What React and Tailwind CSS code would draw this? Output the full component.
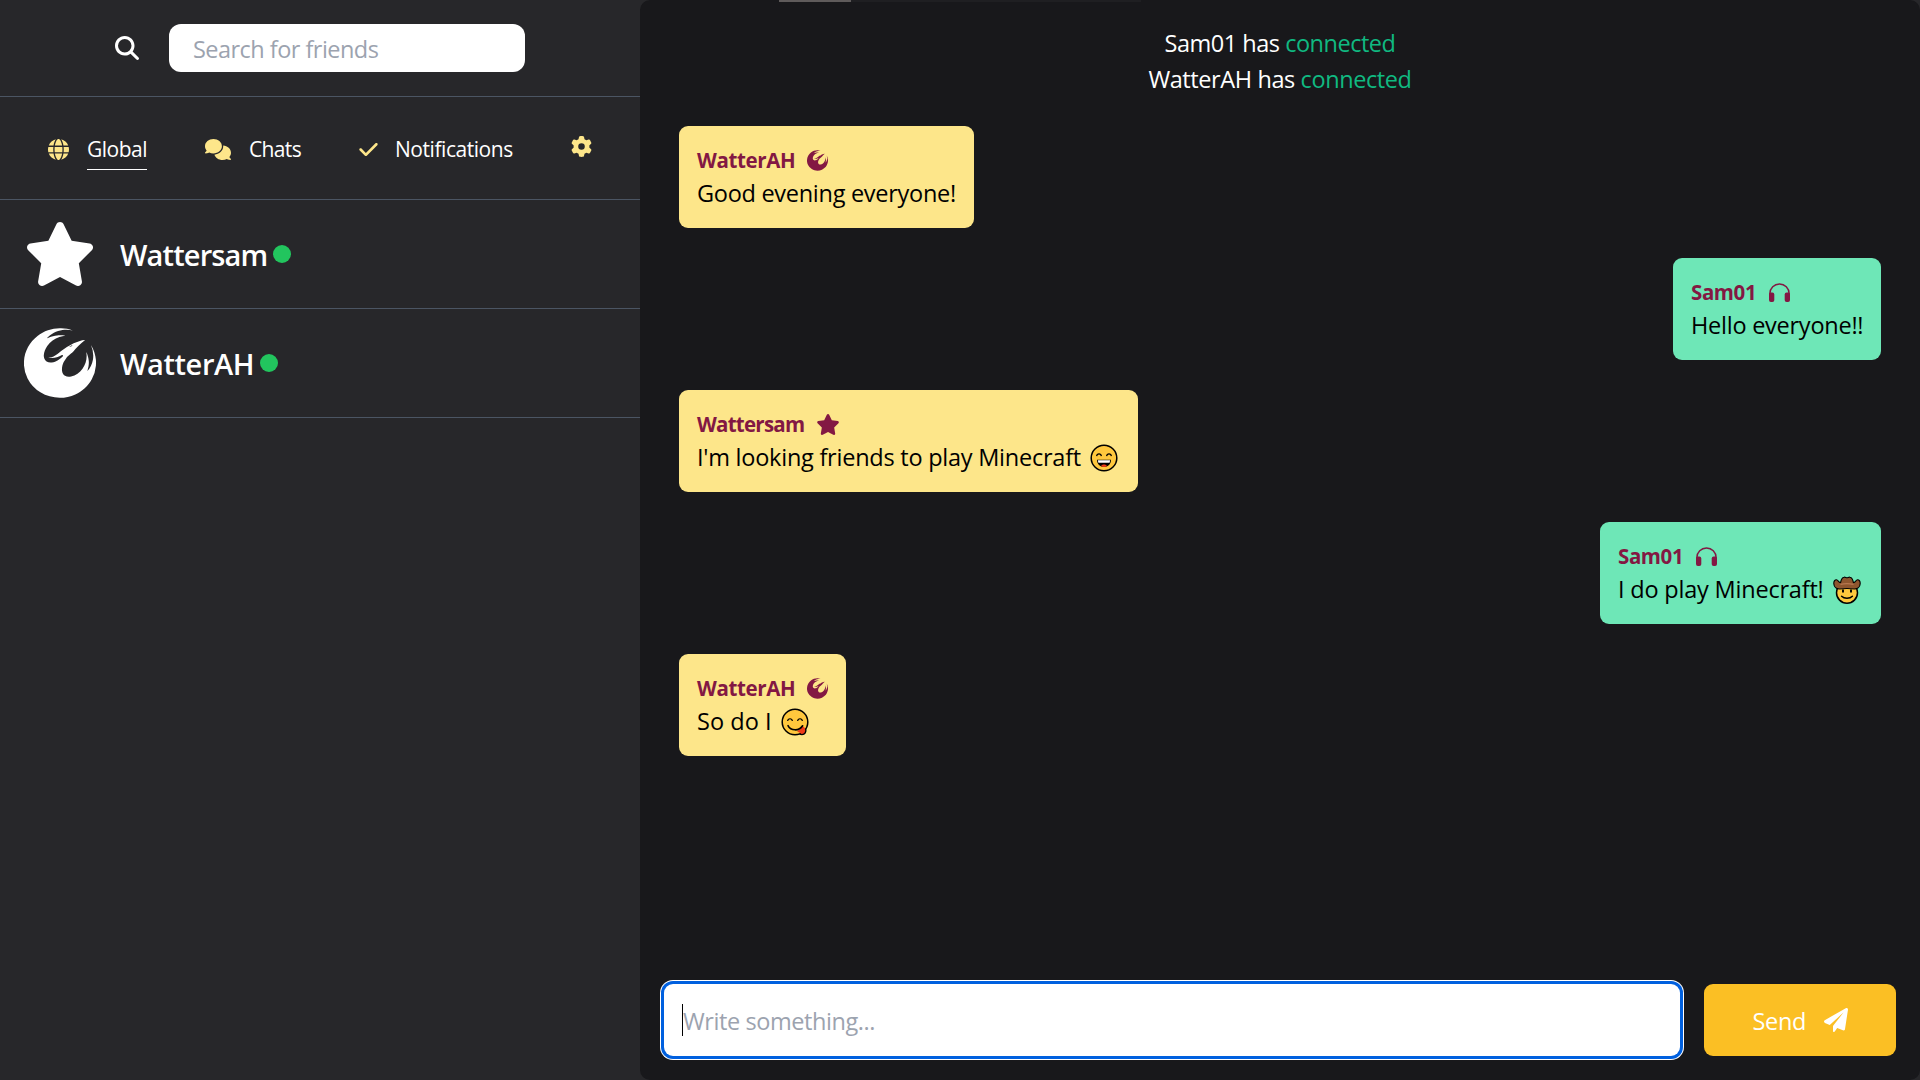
import React from "react";
import {
  FaMagnifyingGlass,
  FaGlobe,
  FaComments,
  FaGear,
  FaStar,
  FaPhoenixSquadron,
} from "react-icons/fa6";

function CheckIcon({ className }) {
  return (
    <svg viewBox="0 0 512 512" fill="currentColor" className={className}>
      <path d="M470.6 105.4c12.5 12.5 12.5 32.8 0 45.3l-256 256c-12.5 12.5-32.8 12.5-45.3 0l-128-128c-12.5-12.5-12.5-32.8 0-45.3s32.8-12.5 45.3 0L192 338.7 425.4 105.4c12.5-12.5 32.8-12.5 45.3 0z" />
    </svg>
  );
}

function PlaneIcon({ className }) {
  return (
    <svg viewBox="0 0 512 512" fill="currentColor" className={className}>
      <path d="M511.6 36.86l-64 415.1c-1.5 9.734-7.375 18.22-15.97 23.05c-4.844 2.719-10.27 4.097-15.68 4.097c-4.188 0-8.319-.8154-12.29-2.472l-122.6-51.1l-50.86 76.29C226.3 508.5 219.8 512 212.8 512C201.3 512 192 502.7 192 491.2v-96.18c0-7.115 2.372-14.03 6.742-19.64L416 96l-293.7 264.3L19.69 317.5C8.438 312.8 .8125 302.2 .0625 289.5s5.469-23.72 16.06-29.99l448-255.1c10.69-6.109 23.88-5.547 34 1.406S513.5 24.72 511.6 36.86z" />
    </svg>
  );
}

function HeadphonesIcon({ className }) {
  return (
    <svg viewBox="0 0 21 21" fill="none" className={className}>
      <path d="M.9 13v-1.500a9.600 9.600 0 0 1 19.200 0V13" stroke="currentColor" strokeWidth="1.500" />
      <rect x="0" y="10.600" width="5.300" height="9.400" rx="1.900" fill="currentColor" />
      <rect x="15.700" y="10.600" width="5.300" height="9.400" rx="1.900" fill="currentColor" />
    </svg>
  );
}

function GrinEmoji({ className }) {
  return (
    <svg viewBox="0 0 28 28" fill="none" className={className}>
      <circle cx="14" cy="14" r="12.8" fill="#ffc83d" stroke="#000" strokeWidth="1.5" />
      <path d="M6.6 12.2c.5-3 4.3-3 4.8 0M16.6 12.2c.5-3 4.3-3 4.8 0" stroke="#000" strokeWidth="1.2" />
      <path d="M7 15.8h14c0 4.4-3 7.2-7 7.2s-7-2.8-7-7.2z" fill="#000" />
      <path d="M7.8 16.2h12.4l-.6 2.6H8.4z" fill="#fff" />
      <path d="M11 22.2c.6-2.4 5.4-2.4 6 0-1.8.9-4.2.9-6 0z" fill="#f03a17" />
    </svg>
  );
}

function CowboyEmoji({ className }) {
  return (
    <svg viewBox="0 0 28 28" fill="none" strokeLinejoin="round" className={className}>
      <circle cx="14" cy="16.700" r="10.500" fill="#ffc83d" stroke="#000" strokeWidth="1.5" />
      <path
        d="M7.600 6.600C8 4.200 9 1.600 11 1.200c1.200-.3 2 .5 3 .5s1.800-.8 3-.5c2 .4 3 3 3.400 5.400 2.400 0 2.200-2.800 4.200-2.800 1.700 0 2.700 1.700 2.600 3.800-.2 3.200-2.700 5.400-5.600 5.400-4.800-.6-10.400-.6-15.200 0-2.900 0-5.400-2.200-5.600-5.400C.7 5.500 1.700 3.800 3.400 3.800c2 0 1.800 2.800 4.200 2.800z"
        fill="#8e562e"
        stroke="#000"
        strokeWidth="1.100"
      />
      <path d="M7.400 8.300c4-.7 9.200-.7 13.200 0" stroke="#b87850" strokeWidth="1.200" />
      <path d="M10 13.600v2.800M18 13.600v2.800" stroke="#000" strokeWidth="1.900" />
      <path d="M8.600 20.200c2.600 2.600 8.200 2.600 10.800 0" stroke="#000" strokeWidth="1.500" strokeLinecap="round" />
    </svg>
  );
}

function YumEmoji({ className }) {
  return (
    <svg viewBox="0 0 28 28" fill="none" className={className}>
      <circle cx="14" cy="14" r="12.8" fill="#ffc83d" stroke="#000" strokeWidth="1.5" />
      <path d="M6.600 13c.5-3 4.300-3 4.800 0M16.600 13c.5-3 4.300-3 4.800 0" stroke="#000" strokeWidth="1.200" />
      <path d="M16.200 23.600l5.400-5.400c2 .8 3.600 3 3.200 5.600-.4 2.200-3 3-4.600 2.200-1.200-.8-2.400-2-4-2.400z" fill="#f03a17" />
      <path d="M24.600 20.600c1 3.200-.8 6-3.600 6-1 0-1.800-.3-2.400-.8" stroke="#000" strokeWidth="1.400" />
      <path d="M7 17.600c2.800 5.600 11.200 5.600 14.600.2" stroke="#000" strokeWidth="1.600" strokeLinecap="round" />
    </svg>
  );
}

const MESSAGES = [
  { name: "WatterAH", nameClass: "w-[99px] tracking-[-0.35px]", Icon: FaPhoenixSquadron, iconSize: "w-[21px]", text: "Good evening everyone!", textClass: "tracking-[-0.28px]", width: "w-[295px]" },
  { name: "Sam01", nameClass: "w-[67px] tracking-[-0.4px]", Icon: HeadphonesIcon, iconSize: "w-[21px]", text: "Hello everyone!!", textClass: "tracking-[-0.25px]", width: "w-[208px]", own: true },
  { name: "Wattersam", nameClass: "w-[108px] tracking-[-0.75px]", Icon: FaStar, iconSize: "w-6", text: "I'm looking friends to play Minecraft", textClass: "w-[384px] tracking-[-0.24px]", width: "w-[459px]", Emoji: GrinEmoji },
  { name: "Sam01", nameClass: "w-[67px] tracking-[-0.4px]", Icon: HeadphonesIcon, iconSize: "w-[21px]", text: "I do play Minecraft!", textClass: "w-[206px] tracking-[-0.2px]", width: "w-[281px]", Emoji: CowboyEmoji, own: true },
  { name: "WatterAH", nameClass: "w-[99px] tracking-[-0.35px]", Icon: FaPhoenixSquadron, iconSize: "w-[21px]", text: "So do I", textClass: "w-[75px] tracking-[0.05px]", width: "w-[167px]", Emoji: YumEmoji },
];

function Message({ name, nameClass, Icon, iconSize, text, textClass, width, Emoji, own }) {
  return (
    <div
      className={`h-[102px] rounded-[9px] px-[18px] pt-[18px] ${width} ${own ? "self-end bg-[#6ee7b7]" : "self-start bg-[#fde68a]"}`}
    >
      <div className="flex h-[33px] items-center gap-[11px] text-[#831843]">
        <span className={`text-[20.5px] leading-[33px] font-bold whitespace-nowrap ${nameClass}`}>{name}</span>
        <Icon className={`h-[21px] ${iconSize}`} />
      </div>
      <div className="flex h-[33px] items-center gap-[9px] whitespace-nowrap text-black">
        <span className={`text-[23.5px] leading-[33px] ${textClass}`}>{text}</span>
        {Emoji && <Emoji className="h-7 w-7 shrink-0" />}
      </div>
    </div>
  );
}

function Friend({ name, textClass, Icon, iconClass }) {
  return (
    <div className="flex h-[109px] items-center border-b border-[#4b5563] pl-6">
      <Icon className={`w-[72px] text-white ${iconClass}`} />
      <span className={`ml-6 pt-[2px] text-[29px] leading-9 font-semibold whitespace-nowrap text-white ${textClass}`}>{name}</span>
      <span className="ml-[6px] h-[18px] w-[18px] rounded-full bg-[#22c55e]" />
    </div>
  );
}

export default function App() {
  return (
    <div className="relative flex h-[1080px] w-[1920px] overflow-hidden bg-[#27272a] font-['Open_Sans',sans-serif]">
      <aside className="w-[640px] shrink-0">
        <div className="flex h-[97px] items-center border-b border-[#4b5563] pl-[115px]">
          <FaMagnifyingGlass className="h-6 w-6 text-white" />
          <div className="ml-[30px] flex h-12 w-[356px] items-center rounded-xl bg-white pt-[2px] pl-6">
            <span className="text-[23.5px] leading-9 tracking-[-0.53px] text-[#9ca3af]">Search for friends</span>
          </div>
        </div>
        <nav className="flex h-[103px] items-center border-b border-[#4b5563] pt-[2px] pl-12 text-[21px] leading-[34px] text-white">
          <FaGlobe className="h-[21px] w-[21px] text-[#fde68a]" />
          <span className="mt-[3px] ml-[18px] h-[38px] w-[60px] border-b border-white leading-[35px] tracking-[-0.5px] whitespace-nowrap">Global</span>
          <FaComments className="ml-[58px] h-[21px] w-[26px] text-[#fde68a]" />
          <span className="ml-[18px] w-[53px] tracking-[-0.65px]">Chats</span>
          <CheckIcon className="ml-[56px] h-[21px] w-[21px] text-[#fde68a]" />
          <span className="ml-[16px] w-[118px] tracking-[-0.45px]">Notifications</span>
          <FaGear className="mb-[5px] ml-[58px] h-[21px] w-[21px] text-[#fde68a]" />
        </nav>
        <Friend name="Wattersam" textClass="w-[147px] tracking-[-0.85px]" Icon={FaStar} iconClass="h-16" />
        <Friend name="WatterAH" textClass="w-[134px] tracking-[-0.4px]" Icon={FaPhoenixSquadron} iconClass="h-[72px]" />
      </aside>

      <main className="flex w-[1280px] flex-col rounded-[10px] bg-[#18181b]">
        <div className="flex h-[126px] flex-col items-center pt-[25px] text-[23.5px] leading-9 text-white">
          <p className="tracking-[-0.48px]">
            Sam01 has <span className="text-[#10b981]">connected</span>
          </p>
          <p className="tracking-[-0.4px]">
            WatterAH has <span className="text-[#10b981]">connected</span>
          </p>
        </div>
        <div className="flex flex-1 flex-col gap-[30px] px-[39px]">
          {MESSAGES.map((m, i) => (
            <Message key={i} {...m} />
          ))}
        </div>
        <div className="flex h-24 gap-6 px-6 pb-6 text-[23.5px] leading-9">
          <div className="flex h-[72px] w-[1016px] items-center rounded-[9px] bg-white pl-[18px] shadow-[0_0_0_3px_#0060df,0_0_0_4px_#ffffff]">
            <span className="h-8 w-px bg-black" />
            <span className="pt-[2px] tracking-[-0.42px] text-[#9ca3af]">Write something...</span>
          </div>
          <div className="flex h-[72px] w-[192px] items-center justify-center gap-[18px] rounded-[9px] bg-[#fbbf24] text-white">
            <span className="w-[53px] pt-[2px] tracking-[-0.3px]">Send</span>
            <PlaneIcon className="h-6 w-6" />
          </div>
        </div>
      </main>

      <div className="absolute top-0 left-[779px] flex h-[2px]">
        <span className="w-[72px] bg-[#5f5b5b]" />
        <span className="w-[290px] bg-[#1f1f22]" />
      </div>
    </div>
  );
}
